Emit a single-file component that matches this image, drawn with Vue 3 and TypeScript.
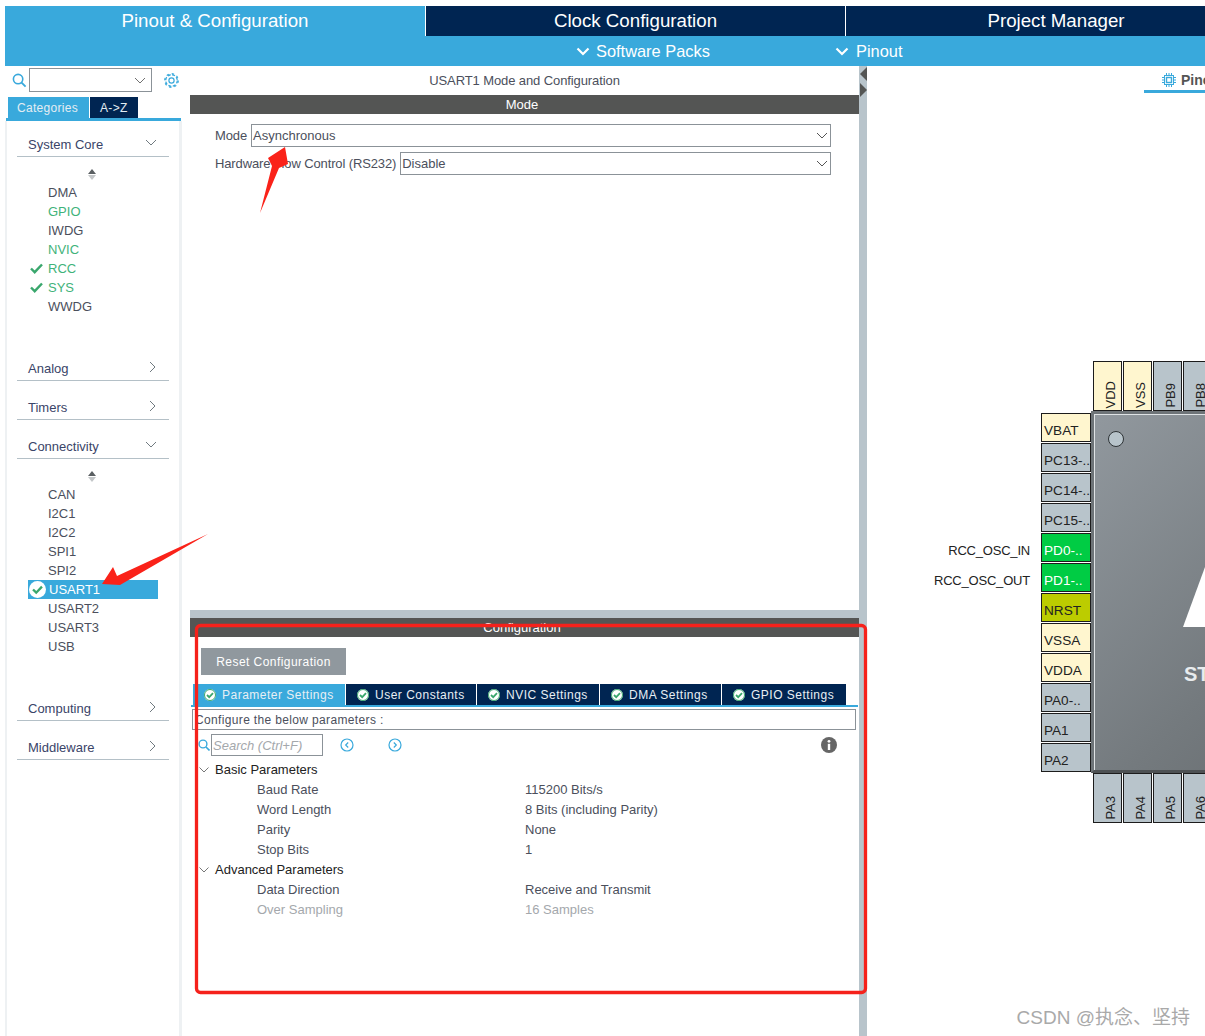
<script setup lang="ts">
const coreItems = [
  { name: 'DMA' },
  { name: 'GPIO', on: true },
  { name: 'IWDG' },
  { name: 'NVIC', on: true },
  { name: 'RCC', on: true, check: true },
  { name: 'SYS', on: true, check: true },
  { name: 'WWDG' },
]
const connItems = ['CAN', 'I2C1', 'I2C2', 'SPI1', 'SPI2', 'USART1', 'USART2', 'USART3', 'USB']
const tabs = [
  { label: 'Parameter Settings', width: 152 },
  { label: 'User Constants', width: 130 },
  { label: 'NVIC Settings', width: 122 },
  { label: 'DMA Settings', width: 121 },
  { label: 'GPIO Settings', width: 124 },
]

const basicParams = [
  ['Baud Rate', '115200 Bits/s'],
  ['Word Length', '8 Bits (including Parity)'],
  ['Parity', 'None'],
  ['Stop Bits', '1'],
]

const topPins = [
  { n: 'VDD', c: 'power' },
  { n: 'VSS', c: 'power' },
  { n: 'PB9', c: '' },
  { n: 'PB8', c: '' },
]
const leftPins = [
  { n: 'VBAT', c: 'power' },
  { n: 'PC13-..', c: '' },
  { n: 'PC14-..', c: '' },
  { n: 'PC15-..', c: '' },
  { n: 'PD0-..', c: 'green', label: 'RCC_OSC_IN' },
  { n: 'PD1-..', c: 'green', label: 'RCC_OSC_OUT' },
  { n: 'NRST', c: 'olive' },
  { n: 'VSSA', c: 'power' },
  { n: 'VDDA', c: 'power' },
  { n: 'PA0-..', c: '' },
  { n: 'PA1', c: '' },
  { n: 'PA2', c: '' },
]
const bottomPins = ['PA3', 'PA4', 'PA5', 'PA6']
</script>

<template>
  <div class="page">
    <header class="topbar">
      <div class="main-tabs">
        <div class="main-tab active">Pinout &amp; Configuration</div>
        <div class="main-tab">Clock Configuration</div>
        <div class="main-tab">Project Manager</div>
      </div>
      <div class="sub-bar">
        <span class="sub-item packs">
          <svg width="14" height="9" viewBox="0 0 14 9"><path d="M1.500 1.500 7 7l5.500-5.500" fill="none" stroke="#fff" stroke-width="2.200" /></svg>
          Software Packs
        </span>
        <span class="sub-item wide">
          <svg width="14" height="9" viewBox="0 0 14 9"><path d="M1.500 1.500 7 7l5.500-5.500" fill="none" stroke="#fff" stroke-width="2.200" /></svg>
          Pinout
        </span>
      </div>
    </header>

    <div class="workspace">
      <aside class="sidebar">
        <div class="search-row">
          <svg width="15" height="15" viewBox="0 0 16 16"><circle cx="6.500" cy="6.500" r="5" fill="none" stroke="#39a9dc" stroke-width="1.700" /><path d="m10.200 10.200 4.300 4.300" stroke="#39a9dc" stroke-width="2" /></svg>
          <div class="search-box">
            <svg width="12" height="7" viewBox="0 0 12 7"><path d="m1 1 5 5 5-5" fill="none" stroke="#707070" /></svg>
          </div>
          <svg class="gear" width="17" height="17" viewBox="0 0 17 17">
            <circle cx="8.500" cy="8.500" r="5.800" fill="none" stroke="#39a9dc" stroke-width="1.300" stroke-dasharray="3 1.550" />
            <circle cx="8.500" cy="8.500" r="6.800" fill="none" stroke="#39a9dc" stroke-width="1.200" stroke-dasharray="2.400 2.940" />
            <circle cx="8.500" cy="8.500" r="2.600" fill="none" stroke="#39a9dc" stroke-width="1.200" />
          </svg>
        </div>
        <div class="side-tabs">
          <div class="side-tab active">Categories</div>
          <div class="side-tab">A-&gt;Z</div>
        </div>
        <div class="side-body">
          <div class="group-head">System Core
            <svg class="down" width="12" height="7" viewBox="0 0 12 7"><path d="m1 1 5 5 5-5" fill="none" stroke="#707a80" /></svg>
          </div>
          <div class="group-body">
            <div class="sorter"><i class="up"></i><i class="dn"></i></div>
            <div v-for="it in coreItems" :key="it.name" class="item" :class="{ on: it.on }">
              <svg v-if="it.check" class="tick" width="13" height="11" viewBox="0 0 13 11"><path d="m1 5.500 3.700 3.700L12 1.500" fill="none" stroke="#3aa76d" stroke-width="2.400" /></svg>
              {{ it.name }}
            </div>
          </div>
          <div class="group-head">Analog
            <svg class="right" width="7" height="12" viewBox="0 0 7 12"><path d="m1 1 5 5-5 5" fill="none" stroke="#707a80" /></svg>
          </div>
          <div class="group-head">Timers
            <svg class="right" width="7" height="12" viewBox="0 0 7 12"><path d="m1 1 5 5-5 5" fill="none" stroke="#707a80" /></svg>
          </div>
          <div class="group-head">Connectivity
            <svg class="down" width="12" height="7" viewBox="0 0 12 7"><path d="m1 1 5 5 5-5" fill="none" stroke="#707a80" /></svg>
          </div>
          <div class="group-body">
            <div class="sorter"><i class="up"></i><i class="dn"></i></div>
            <div v-for="name in connItems" :key="name" class="item" :class="{ selected: name === 'USART1' }">
              <svg v-if="name === 'USART1'" class="ok" width="17" height="17" viewBox="0 0 16 16">
                <circle cx="8" cy="8" r="8" fill="#fff" />
                <path d="m3.800 8 3 3 5.400-5.700" fill="none" stroke="#3aa76d" stroke-width="2.200" />
              </svg>
              {{ name }}
            </div>
          </div>
          <div class="group-head">Computing
            <svg class="right" width="7" height="12" viewBox="0 0 7 12"><path d="m1 1 5 5-5 5" fill="none" stroke="#707a80" /></svg>
          </div>
          <div class="group-head">Middleware
            <svg class="right" width="7" height="12" viewBox="0 0 7 12"><path d="m1 1 5 5-5 5" fill="none" stroke="#707a80" /></svg>
          </div>
        </div>
      </aside>

      <main class="center">
        <section class="mode-panel">
          <div class="panel-title">USART1 Mode and Configuration</div>
          <div class="dark-head">Mode</div>
          <div class="form">
            <div class="form-row">
              <span>Mode</span>
              <div class="select">Asynchronous
                <svg width="12" height="7" viewBox="0 0 12 7"><path d="m1 1 5 5 5-5" fill="none" stroke="#555" /></svg>
              </div>
            </div>
            <div class="form-row">
              <span>Hardware Flow Control (RS232)</span>
              <div class="select">Disable
                <svg width="12" height="7" viewBox="0 0 12 7"><path d="m1 1 5 5 5-5" fill="none" stroke="#555" /></svg>
              </div>
            </div>
          </div>
        </section>

        <section class="config-panel">
          <div class="dark-head">Configuration</div>
          <button class="reset">Reset Configuration</button>
          <div class="cfg-tabs">
            <div v-for="(t, i) in tabs" :key="t.label" class="cfg-tab" :class="{ active: i === 0 }" :style="{ width: t.width + 'px' }">
              <svg width="12" height="12" viewBox="0 0 12 12">
                <circle cx="6" cy="6" r="6" fill="#fff" />
                <circle cx="6" cy="6" r="5.500" fill="none" stroke="#3aa76d" stroke-width="1" />
                <path d="m3 6 2.200 2.200 3.800-4" fill="none" stroke="#3aa76d" stroke-width="1.800" />
              </svg>
              {{ t.label }}
            </div>
          </div>
          <div class="configure-box">Configure the below parameters :</div>
          <div class="tool-row">
            <svg width="12" height="12" viewBox="0 0 12 12"><circle cx="5" cy="5" r="3.900" fill="none" stroke="#39a9dc" stroke-width="1.400" /><path d="m8 8 3.500 3.500" stroke="#39a9dc" stroke-width="1.600" /></svg>
            <div class="search-input">Search (Ctrl+F)</div>
            <svg class="nav first" width="14" height="14" viewBox="0 0 14 14"><circle cx="7" cy="7" r="6" fill="none" stroke="#39a9dc" stroke-width="1.200" /><path d="M8.200 4.500 5.700 7l2.500 2.500" fill="none" stroke="#39a9dc" stroke-width="1.200" /></svg>
            <svg class="nav second" width="14" height="14" viewBox="0 0 14 14"><circle cx="7" cy="7" r="6" fill="none" stroke="#39a9dc" stroke-width="1.200" /><path d="M5.800 4.500 8.300 7l-2.500 2.500" fill="none" stroke="#39a9dc" stroke-width="1.200" /></svg>
            <svg class="info" width="16" height="16" viewBox="0 0 16 16">
              <circle cx="8" cy="8" r="8" fill="#666" />
              <circle cx="8" cy="4.300" r="1.400" fill="#fff" />
              <rect x="6.800" y="6.800" width="2.400" height="6.200" fill="#fff" />
            </svg>
          </div>
          <div class="tree">
            <div class="tree-head">
              <svg width="10" height="6" viewBox="0 0 10 6"><path d="m.5.500 4.500 4.500L9.500.500" fill="none" stroke="#777" /></svg>
              Basic Parameters
            </div>
            <div v-for="p in basicParams" :key="p[0]" class="tree-row">
              <span>{{ p[0] }}</span><span>{{ p[1] }}</span>
            </div>
            <div class="tree-head">
              <svg width="10" height="6" viewBox="0 0 10 6"><path d="m.5.500 4.500 4.500L9.500.500" fill="none" stroke="#777" /></svg>
              Advanced Parameters
            </div>
            <div class="tree-row"><span>Data Direction</span><span>Receive and Transmit</span></div>
            <div class="tree-row muted"><span>Over Sampling</span><span>16 Samples</span></div>
          </div>
        </section>
      </main>

      <div class="splitter">
        <i class="arrow-l"></i>
        <i class="arrow-r"></i>
      </div>

      <section class="pin-pane">
        <div class="view-tab">
          <svg width="14" height="14" viewBox="0 0 14 14" fill="none" stroke="#39a9dc">
            <rect x="2.500" y="2.500" width="9" height="9" />
            <rect x="4.500" y="4.500" width="5" height="5" stroke-width="1.400" />
            <path d="M4.500 0v2M7 0v2M9.500 0v2M4.500 12v2M7 12v2M9.500 12v2M0 4.500h2M0 7h2M0 9.500h2M12 4.500h2M12 7h2M12 9.500h2" />
          </svg>
          <b>Pinout view</b>
        </div>

        <div class="mcu">
          <div class="pin-row top">
            <div v-for="p in topPins" :key="p.n" class="pin vert" :class="p.c"><span>{{ p.n }}</span></div>
          </div>
          <div class="mcu-mid">
            <div class="pin-col">
              <div v-for="p in leftPins" :key="p.n" class="pin horiz" :class="p.c">
                <em v-if="p.label">{{ p.label }}</em>{{ p.n }}
              </div>
            </div>
            <div class="chip">
              <i class="dot"></i>
              <i class="logo"></i>
              <b class="chip-text">ST</b>
            </div>
          </div>
          <div class="pin-row bottom">
            <div v-for="n in bottomPins" :key="n" class="pin vert"><span>{{ n }}</span></div>
          </div>
        </div>

        <div class="watermark">CSDN @执念、坚持</div>
      </section>
    </div>

    <!-- annotations drawn on top of the screenshot -->
    <svg class="marks" width="1205" height="1036" viewBox="0 0 1205 1036">
      <rect x="196.500" y="625.500" width="669" height="367" rx="4" fill="none" stroke="#f5211b" stroke-width="3.300" />
      <polygon points="285,147 288,164 279,168 260,213 272,166 268,158" fill="#fa2219" />
      <polygon points="102,584 113,567 117,576 208,534 120,585" fill="#fa2219" />
    </svg>
  </div>
</template>

<style>
html, body {
  margin: 0;
  background: #fff;
}
</style>

<style scoped>
.page {
  position: relative;
  width: 1205px;
  height: 1036px;
  overflow: hidden;
  background: #fff;
  box-sizing: border-box;
  padding: 6px 0 0 5px;
  font-family: "Liberation Sans", Arial, sans-serif;
  font-size: 13px;
  color: #4b4f5c;
}
.topbar {
  width: 1200px;
  height: 60px;
  overflow: hidden;
  background: #39a9dc;
}
.main-tabs {
  display: flex;
  gap: 1px;
  height: 30px;
  background: #fff;
  width: 1262px;
}
.main-tab {
  flex: 0 0 420px;
  background: #002552;
  color: #fff;
  font-size: 18.700px;
  line-height: 30px;
  text-align: center;
}
.main-tab:nth-child(2) {
  flex-basis: 419px;
}
.main-tab.active {
  background: #39a9dc;
}
.sub-bar {
  display: flex;
  height: 30px;
  box-sizing: border-box;
  padding: 1px 0 0 571px;
  align-items: center;
  color: #fff;
  font-size: 16.400px;
}
.sub-item {
  display: flex;
  align-items: center;
  gap: 6px;
}
.sub-item.packs {
  width: 259px;
}
.sub-item.wide {
  gap: 7px;
}
.workspace {
  display: flex;
  height: 970px;
}
.sidebar {
  flex: 0 0 177px;
  min-width: 0;
  display: flex;
  flex-direction: column;
}
.search-row {
  display: flex;
  align-items: center;
  height: 26px;
  box-sizing: border-box;
  padding: 2px 0 0 7px;
  gap: 2px;
}
.search-box {
  width: 123px;
  height: 24px;
  box-sizing: border-box;
  border: 1px solid #8b9298;
  display: flex;
  align-items: center;
  justify-content: flex-end;
  padding-right: 5px;
}
.gear {
  margin-left: 9px;
}
.side-tabs {
  display: flex;
  gap: 1px;
  padding: 5px 0 0 2px;
  height: 21px;
  border-bottom: 3px solid #39a9dc;
  margin: 0 1px;
}
.side-tab {
  height: 21px;
  line-height: 22px;
  padding: 0 10px;
  background: #002552;
  color: #e4edf3;
  font-size: 12px;
  letter-spacing: 0.300px;
}
.side-tab.active {
  background: #39a9dc;
  padding: 0 11px 0 9px;
}
.side-body {
  flex: 1;
  border-left: 2px solid #eef1f3;
  border-right: 3px solid #eef1f3;
  padding: 0 10px;
  box-sizing: border-box;
}
.group-head {
  height: 39px;
  box-sizing: border-box;
  border-bottom: 1px solid #b4c0c7;
  display: flex;
  align-items: flex-end;
  justify-content: space-between;
  padding: 0 13px 4px 11px;
  color: #3a4468;
}
.group-head:first-child {
  height: 36px;
}
.group-head svg.down {
  position: relative;
  top: -6px;
  left: 1px;
}
.group-head svg.right {
  position: relative;
  top: -3px;
}
.group-body {
  position: relative;
  padding: 26px 0;
}
.sorter {
  position: absolute;
  top: 12px;
  left: 71px;
}
.sorter i {
  display: block;
  width: 0;
  height: 0;
  border-left: 4.500px solid transparent;
  border-right: 4.500px solid transparent;
}
.sorter .up {
  border-bottom: 5px solid #5a5f62;
  margin-bottom: 1px;
}
.sorter .dn {
  border-top: 5px solid #c3c6c8;
}
.item {
  position: relative;
  height: 19px;
  line-height: 19px;
  padding-left: 31px;
  margin-right: 11px;
}
.item.on {
  color: #3fb37a;
}
.item.selected {
  background: #39a9dc;
  color: #fff;
  margin-left: 11px;
  padding-left: 21px;
}
.tick {
  position: absolute;
  left: 13px;
  top: 4px;
}
.ok {
  position: absolute;
  left: 1px;
  top: 1px;
}
.center {
  margin-left: 8px;
  flex: 0 0 669px;
  min-width: 0;
  display: flex;
  flex-direction: column;
  background: #b8c4cb;
  gap: 8px;
}
.mode-panel {
  height: 544px;
  background: #fff;
}
.panel-title {
  height: 29px;
  line-height: 29px;
  text-align: center;
  letter-spacing: -0.100px;
}
.dark-head {
  height: 19px;
  line-height: 19px;
  background: #545554;
  color: #fff;
  text-align: center;
  padding-right: 5px;
}
.form {
  padding: 10px 0 0 25px;
}
.form-row {
  display: flex;
  align-items: center;
  gap: 4px;
  width: 616px;
  height: 23px;
  margin-bottom: 5px;
}
.form-row span {
  letter-spacing: -0.130px;
}
.select {
  flex: 1;
  height: 23px;
  line-height: 21px;
  box-sizing: border-box;
  border: 1px solid #8b9298;
  padding: 0 2px 0 1px;
  display: flex;
  justify-content: space-between;
  align-items: center;
}
.config-panel {
  flex: 1;
  background: #fff;
  overflow: hidden;
}
.reset {
  display: block;
  margin: 11px 0 9px 11px;
  width: 145px;
  height: 27px;
  border: 0;
  padding: 0;
  background: #90989e;
  color: #fff;
  font: 12px "Liberation Sans", Arial, sans-serif;
  letter-spacing: 0.450px;
}
.cfg-tabs {
  display: flex;
  gap: 1px;
  height: 21px;
  padding-left: 2px;
  margin: 0 1px;
  border-bottom: 2px solid #39a9dc;
}
.cfg-tab {
  display: flex;
  align-items: center;
  gap: 6px;
  box-sizing: border-box;
  padding-left: 11px;
  background: #002552;
  color: #e8eff4;
  font-size: 12px;
  letter-spacing: 0.500px;
  white-space: nowrap;
}
.cfg-tab.active {
  background: #39a9dc;
}
.configure-box {
  height: 21px;
  line-height: 20px;
  box-sizing: border-box;
  margin: 2px 3px 0 2px;
  border: 1px solid #8b9298;
  padding-left: 2px;
  font-size: 12px;
  letter-spacing: 0.350px;
}
.tool-row {
  display: flex;
  align-items: center;
  height: 22px;
  padding-left: 8px;
  margin-top: 4px;
  gap: 1px;
}
.search-input {
  width: 112px;
  height: 22px;
  line-height: 21px;
  box-sizing: border-box;
  border: 1px solid #8b9298;
  padding-left: 1px;
  font-style: italic;
  color: #a4a8ac;
}
.nav.first {
  margin-left: 16px;
}
.nav.second {
  margin-left: 33px;
}
.info {
  margin-left: 418px;
}
.tree {
  padding-top: 4px;
}
.tree-head {
  height: 20px;
  line-height: 20px;
  display: flex;
  align-items: center;
  gap: 6px;
  padding-left: 9px;
  color: #222;
}
.tree-row {
  height: 20px;
  line-height: 20px;
  display: grid;
  grid-template-columns: 268px 1fr;
  padding-left: 67px;
}
.tree-row.muted {
  color: #a4a8ac;
}
.splitter {
  flex: 0 0 8px;
  background: #b8c4cb;
  padding-top: 1px;
  box-sizing: border-box;
}
.splitter i {
  display: block;
  width: 0;
  height: 0;
  border-top: 7px solid transparent;
  border-bottom: 7px solid transparent;
}
.arrow-l {
  border-right: 7px solid #545554;
  margin: 0 0 2px 1px;
}
.arrow-r {
  border-left: 7px solid #545554;
  margin-left: 1px;
}
.pin-pane {
  position: relative;
  flex: 1;
  min-width: 0;
  overflow: hidden;
  background: #fff;
}
.view-tab {
  position: absolute;
  left: 277px;
  top: 0;
  width: 200px;
  height: 21px;
  border-bottom: 3px solid #39a9dc;
  display: flex;
  align-items: center;
  gap: 5px;
  padding: 3px 0 0 18px;
  white-space: nowrap;
  color: #555;
  font-size: 14px;
}
.mcu {
  position: absolute;
  left: 174px;
  top: 295px;
  width: 350px;
  font-size: 13.600px;
  color: #222;
}
.pin-row {
  display: flex;
  gap: 1px;
  padding-left: 52px;
}
.pin {
  box-sizing: border-box;
  border: 1px solid #1c1c1c;
  background: #b8c4cb;
  flex: none;
}
.pin.power {
  background: #fff6cf;
}
.pin.green {
  background: #00cc44;
  color: #fff;
}
.pin.olive {
  background: #bccc00;
}
.vert {
  width: 29px;
  height: 50px;
  padding-left: 6px;
  display: flex;
  align-items: flex-end;
  justify-content: center;
  font-size: 13px;
}
.vert span {
  writing-mode: vertical-rl;
  transform: rotate(180deg);
  padding-top: 2px;
}
.mcu-mid {
  display: flex;
}
.pin-col {
  display: flex;
  flex-direction: column;
  gap: 1px;
  padding-top: 2px;
}
.horiz {
  position: relative;
  width: 50px;
  height: 29px;
  line-height: 34px;
  padding-left: 2px;
  white-space: nowrap;
}
.horiz em {
  position: absolute;
  right: calc(100% + 12px);
  top: 0;
  font-style: normal;
  font-size: 13px;
  letter-spacing: -0.200px;
  color: #222;
}
.chip {
  position: relative;
  flex: none;
  width: 300px;
  height: 362px;
  box-sizing: border-box;
  border: 3px solid #6e7478;
  border-bottom-color: #4d5153;
  box-shadow: inset 1px 1px 0 #dfe3e5;
  background: linear-gradient(135deg, #91989e 0%, #747a7e 60%, #64696c 100%);
}
.dot {
  position: absolute;
  left: 14px;
  top: 17px;
  width: 16px;
  height: 16px;
  box-sizing: border-box;
  border-radius: 50%;
  border: 1px solid #2e3336;
  background: #b8c4cb;
}
.logo {
  position: absolute;
  left: 89px;
  top: 153px;
  width: 22px;
  height: 60px;
  background: #fff;
  clip-path: polygon(100% 0, 100% 100%, 0 100%);
}
.chip-text {
  position: absolute;
  left: 90px;
  top: 249px;
  color: #e9ecee;
  font-size: 20px;
}
.watermark {
  position: absolute;
  right: 15px;
  bottom: 7px;
  color: #a9a9a9;
  font-size: 19px;
  font-family: "Liberation Sans", "Noto Sans CJK SC", sans-serif;
}
.marks {
  position: absolute;
  left: 0;
  top: 0;
  pointer-events: none;
}
</style>
